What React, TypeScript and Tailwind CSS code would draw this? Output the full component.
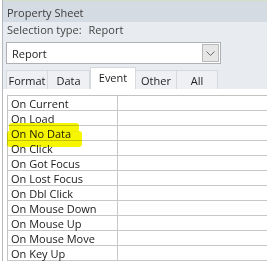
const rows = [
  "On Current",
  "On Load",
  "On No Data",
  "On Click",
  "On Got Focus",
  "On Lost Focus",
  "On Dbl Click",
  "On Mouse Down",
  "On Mouse Up",
  "On Mouse Move",
  "On Key Up",
];

function Tab({ label, width, active }: { label: string; width: string; active?: boolean }) {
  if (active) {
    return (
      <div className={`${width} flex h-[22px] items-start justify-center border-x border-t border-[#d6d9de] bg-white pt-[4px] text-[#1e1e1e]`}>
        {label}
      </div>
    );
  }
  return (
    <div className={`${width} flex h-[19px] items-center justify-center border-t border-r border-[#d6d9de] bg-[#eef0f3] text-[#1e1e1e] first:border-l`}>
      {label}
    </div>
  );
}

export default function App() {
  return (
    <div className="relative flex h-[261px] w-[267px] overflow-hidden bg-white font-['Open_Sans',sans-serif] text-[11px] leading-none">
      <div className="w-[2px] bg-white" />
      <div className="flex flex-1 flex-col border-l border-[#b4b7bc] bg-[#e8ebef]">
        <div className="h-px bg-[#cfe0c4]" />
        <div className="flex h-[25px] items-center bg-[#d5dbe3] pl-[4px] pt-px text-[#3c3c3c]">Property Sheet</div>
        <div className="flex h-[17px] items-center pl-[4px] text-[#444]">
          Selection type:<span className="ml-[7px]">Report</span>
        </div>
        <div className="mt-[5px] pl-[3px]">
          <div className="flex h-[22px] w-[215px] items-center border border-[#adb0b5] bg-white">
            <span className="flex-1 pl-[5px] text-[#1e1e1e]">Report</span>
            <div className="mr-px flex h-[18px] w-[17px] items-center justify-center border border-[#b9b9b9] bg-[#e6e6e6]">
              <svg width="9" height="5" viewBox="0 0 9 5" fill="none">
                <path d="M0.5 0.5 L4.5 4.5 L8.5 0.5" stroke="#6a6a6a" strokeWidth="1" />
              </svg>
            </div>
          </div>
        </div>
        <div className="mt-[3px] flex h-[22px] items-end pl-[3px]">
          <Tab label="Format" width="w-[42px]" />
          <Tab label="Data" width="w-[42px]" />
          <Tab label="Event" width="w-[46px]" active />
          <Tab label="Other" width="w-[41px]" />
          <Tab label="All" width="w-[41px]" />
        </div>
        <div className="flex-1 bg-white pl-[4px] pt-[6px]">
          <div className="border-t border-l border-[#c3c3c3]">
            {rows.map((r) => (
              <div key={r} className="flex h-[15px] border-b border-[#c8c8c8]">
                <div className="flex w-[110px] items-center border-r border-[#c8c8c8] pl-[3px] pt-px text-[#1a1a1a]">{r}</div>
                <div className="flex-1" />
              </div>
            ))}
          </div>
        </div>
      </div>
      <div className="absolute left-[9px] top-[123px] h-[9px] w-[70px] rounded-[3px] bg-[#f6f600] mix-blend-multiply" />
      <div className="absolute left-[7px] top-[131px] h-[16px] w-[75px] rounded-[3px] bg-[#f6f600] mix-blend-multiply" />
    </div>
  );
}
